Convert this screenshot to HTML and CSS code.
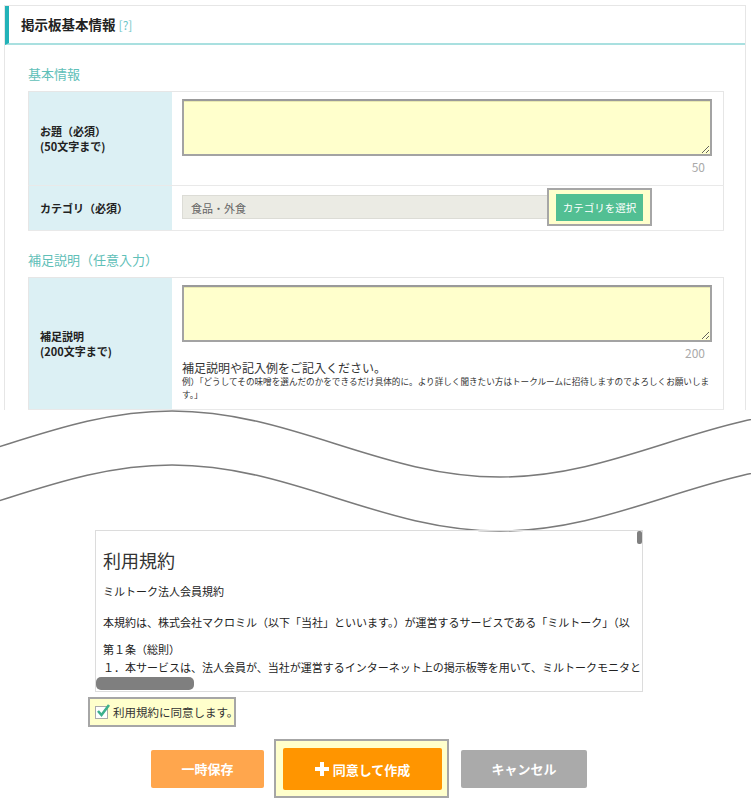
FILE: index.html
```html
<!DOCTYPE html>
<html lang="ja">
<head>
  <meta charset="UTF-8" />
  <title>掲示板基本情報</title>
  <link rel="stylesheet" href="styles.css">
</head>
<body>

  <!-- top of the form, cut off by the wave -->
  <div class="cut">
    <div class="panel">
      <div class="panel-head">掲示板基本情報 <span class="help">[?]</span></div>
      <div class="panel-body">

        <div class="sec-title">基本情報</div>
        <table class="form-table">
          <tr>
            <th>お題（必須）<br>(50文字まで)</th>
            <td class="cell-area">
              <textarea class="area"></textarea>
              <div class="count">50</div>
            </td>
          </tr>
          <tr>
            <th>カテゴリ（必須）</th>
            <td class="cell-cat">
              <div class="cat-row">
                <div class="cat-input">食品・外食</div>
                <div class="hilite cat-hilite">
                  <div class="btn-green">カテゴリを選択</div>
                </div>
              </div>
            </td>
          </tr>
        </table>

        <div class="sec-title sec-title2">補足説明（任意入力）</div>
        <table class="form-table">
          <tr>
            <th>補足説明<br>(200文字まで)</th>
            <td class="cell-area cell-area2">
              <textarea class="area"></textarea>
              <div class="count">200</div>
              <div class="note">補足説明や記入例をご記入ください。</div>
              <div class="note-small">例）「どうしてその味噌を選んだのかをできるだけ具体的に。より詳しく聞きたい方はトークルームに招待しますのでよろしくお願いしま<br>す。」</div>
            </td>
          </tr>
        </table>

      </div>
    </div>
  </div>

  <!-- wave separator -->
  <svg class="wave" width="751" height="120" viewBox="0 0 751 120">
    <path d="M-156 67 C-36.5 67 52.5 1 172 1 C291.5 1 380.5 67 500 67 C619.5 67 708.5 1 828 1" />
    <path d="M-156 121 C-36.5 121 52.5 55 172 55 C291.5 55 380.5 121 500 121 C619.5 121 708.5 55 828 55" />
  </svg>

  <!-- terms -->
  <div class="terms">
    <div class="terms-inner">
      <div class="terms-title">利用規約</div>
      <p>ミルトーク法人会員規約</p>
      <p class="gap">本規約は、株式会社マクロミル（以下「当社」といいます。）が運営するサービスである「ミルトーク」（以</p>
      <p class="gap2">第１条（総則）<br>１．本サービスは、法人会員が、当社が運営するインターネット上の掲示板等を用いて、ミルトークモニタと</p>
    </div>
    <div class="thumb-h"></div>
    <div class="thumb-v"></div>
  </div>

  <div class="hilite agree">
    <span class="checkbox">
      <svg width="16" height="16" viewBox="0 0 16 16"><path d="M3 8 L6.5 12 L14 2" /></svg>
    </span>
    利用規約に同意します。
  </div>

  <div class="buttons">
    <div class="btn btn-save">一時保存</div>
    <div class="hilite main-hilite">
      <div class="btn btn-create">
        <svg width="14" height="14" viewBox="0 0 14 14"><rect x="5" y="0" width="4" height="14" /><rect x="0" y="5" width="14" height="4" /></svg>
        同意して作成
      </div>
    </div>
    <div class="btn btn-cancel">キャンセル</div>
  </div>

</body>
</html>
```

FILE: styles.css
```css
body {
  font-family: "Noto Sans CJK JP", sans-serif;
  background-color: #fff;
  color: #333;
  margin: 0;
  padding: 0;
  width: 751px;
}

/* top form */
.cut {
  height: 410px;
  overflow: hidden;
  padding-top: 5px;
  box-sizing: border-box;
}

.panel {
  margin: 0 5px 0 4px;
  border: 1px solid #e6e6e6;
  height: 600px;
}

.panel-head {
  height: 37px;
  line-height: 37px;
  border-left: 4px solid #22b2b8;
  border-bottom: 2px solid #a9e0e0;
  padding-left: 12px;
  font-size: 13.5px;
  font-weight: bold;
  color: #222;
}

.help {
  font-size: 12px;
  font-weight: normal;
  color: #6cc6c8;
}

.panel-body {
  padding: 0 21px 0 23px;
}

.sec-title {
  font-size: 13px;
  line-height: 18px;
  color: #5fc0b8;
  margin: 20px 0 8px;
}

.sec-title2 {
  margin-top: 20px;
}

.form-table {
  width: 100%;
  border-collapse: collapse;
  border: 1px solid #e6e6e6;
}

.form-table tr {
  border-bottom: 1px solid #e9e9e9;
}

.form-table th {
  width: 132px;
  background-color: #dcf0f4;
  text-align: left;
  vertical-align: middle;
  padding: 0 0 0 11px;
  font-size: 11px;
  line-height: 15px;
  color: #222;
}

.cell-area {
  padding: 7px 11px 11px 10px;
}

.cell-area2 {
  padding-bottom: 8px;
}

.area {
  display: block;
  width: 100%;
  height: 57px;
  box-sizing: border-box;
  margin: 0;
  background-color: #ffffcc;
  border: 2px solid #a3a3a3;
  border-top-color: #9a9a9a;
  box-shadow: inset 0 1px 0 #e8e8b0;
}

.count {
  text-align: right;
  font-size: 12px;
  line-height: 14px;
  color: #aaa;
  margin: 4px 7px 0 0;
}

.note {
  font-size: 12px;
  line-height: 15px;
  color: #333;
}

.note-small {
  font-size: 8.6px;
  line-height: 13px;
  color: #333;
  white-space: nowrap;
}

.cell-cat {
  padding: 2px 10px 4px;
}

.cat-row {
  display: flex;
  align-items: center;
}

.cat-input {
  width: 368px;
  height: 24px;
  line-height: 24px;
  box-sizing: border-box;
  padding-left: 8px;
  background-color: #ebebe4;
  border: 1px solid #dcdcd6;
  font-size: 11px;
  color: #666;
}

.hilite {
  background-color: #ffffcc;
  border: 2px solid #a6a6a6;
}

.cat-hilite {
  margin-left: -3px;
  padding: 4px 7px 3px;
}

.btn-green {
  width: 87px;
  height: 27px;
  line-height: 27px;
  text-align: center;
  background-color: #52bf93;
  color: #fff;
  font-size: 10.5px;
}

/* wave */
.wave {
  display: block;
  overflow: visible;
}

.wave path {
  fill: none;
  stroke: #7a7a7a;
  stroke-width: 1.5;
}

/* terms box */
.terms {
  position: relative;
  margin-left: 95px;
  width: 548px;
  height: 162px;
  box-sizing: border-box;
  border: 1px solid #dcdcdc;
  overflow: hidden;
}

.terms-inner {
  padding: 17px 0 0 7px;
  white-space: nowrap;
}

.terms-title {
  font-size: 18px;
  line-height: 24px;
  color: #333;
}

.terms p {
  margin: 10px 0 0;
  font-size: 11px;
  line-height: 18px;
  color: #222;
}

.terms p.gap {
  margin-top: 13px;
}

.terms p.gap2 {
  margin-top: 9px;
}

.thumb-h {
  position: absolute;
  left: 0;
  bottom: 1px;
  width: 98px;
  height: 13px;
  border-radius: 5px;
  background-color: #7f7f7f;
}

.thumb-v {
  position: absolute;
  right: 0;
  top: 0;
  width: 5px;
  height: 13px;
  border-radius: 2px;
  background-color: #7f7f7f;
}

/* agree checkbox */
.agree {
  display: flex;
  align-items: center;
  margin: 5px 0 0 88px;
  width: 148px;
  height: 30px;
  box-sizing: border-box;
  padding-left: 5px;
  font-size: 11.5px;
  color: #333;
  white-space: nowrap;
}

.checkbox {
  position: relative;
  width: 11px;
  height: 11px;
  border: 1px solid #aaa;
  background-color: #fff;
  margin-right: 5px;
  flex-shrink: 0;
}

.checkbox svg {
  position: absolute;
  left: -1px;
  top: -4px;
}

.checkbox path {
  fill: none;
  stroke: #3db08c;
  stroke-width: 2.6;
}

/* bottom buttons */
.buttons {
  display: flex;
  align-items: center;
  margin-top: 12px;
  padding-left: 151px;
}

.btn {
  display: flex;
  align-items: center;
  justify-content: center;
  border-radius: 2px;
  color: #fff;
  font-size: 13px;
  font-weight: bold;
}

.btn-save {
  width: 113px;
  height: 38px;
  background-color: #ffa64d;
}

.main-hilite {
  margin-left: 10px;
  padding: 7px 5px 6px 7px;
}

.btn-create {
  width: 159px;
  height: 42px;
  background-color: #ff9500;
}

.btn-create svg {
  fill: #fff;
  margin-right: 4px;
}

.btn-cancel {
  margin-left: 12px;
  width: 126px;
  height: 38px;
  background-color: #aaaaaa;
}
```
